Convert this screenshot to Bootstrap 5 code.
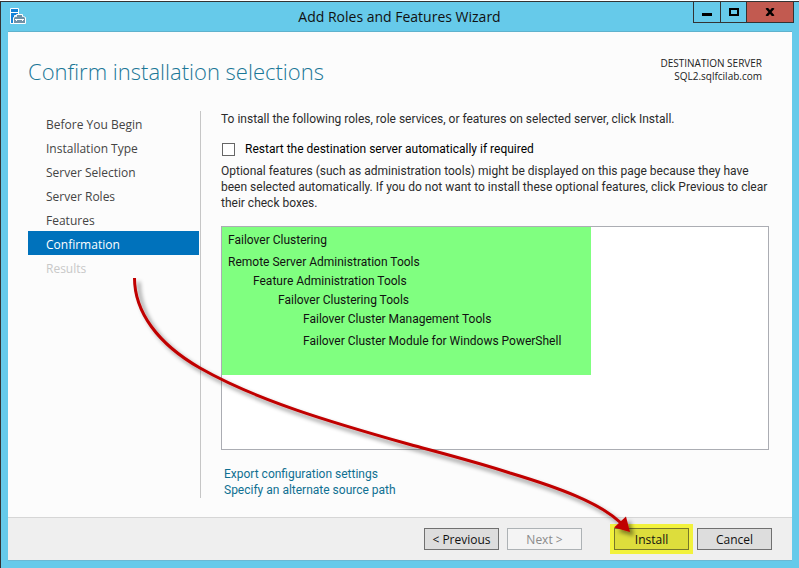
<!DOCTYPE html>
<html lang="en">
<head>
<meta charset="utf-8">
<meta name="viewport" content="width=device-width, initial-scale=1">
<title>Add Roles and Features Wizard</title>
<link href="https://cdn.jsdelivr.net/npm/bootstrap@5.3.0/dist/css/bootstrap.min.css" rel="stylesheet">
<style>
body { font-family: "Open Sans", "Noto Sans", sans-serif; font-size: 12px; line-height: 16px; color: #2b2b2b; background: #fff; padding-top: 1px; }
.wizard { min-height: calc(100vh - 1px); background: #66caea; border: 1px solid #333; border-right: 0; padding: 0 7px 7px; position: relative; }
.title-bar { height: 29px; }
.title-text { font-size: 14px; line-height: 29px; color: #111; padding-left: 80px; }
.app-icon { width: 16px; height: 17px; margin: 6px 0 0 2px; }
.win-group { margin-right: -2px; }
.win-btn { width: 26px; height: 21px; padding: 0; border: 1px solid #333; border-top: 0; border-left: 0; background: transparent; display: flex; align-items: center; justify-content: center; }
.win-first { width: 28px; border-left: 1px solid #333; }
.win-first svg { margin-top: 4px; }
.win-close { width: 47px; background: #c25a50; }
.client { background: #fcfcfc; border-top: 1px solid #5fb2cd; border-bottom: 1px solid #6cb8d3; }
.heading { font-family: "Open Sans", sans-serif; font-size: 22px; line-height: 30px; font-weight: 300; color: #1a7797; }
.server { font-size: 10px; line-height: 13px; color: #222; padding: 1px 30px 0 0; }
.head-row { padding: 24px 0 0 20px; height: 79px; }
.steps { width: 173px; margin-left: 20px; border-right: 1px solid #c6c6c6; padding-right: 1px; }
.steps a { display: block; height: 24px; line-height: 28px; padding-left: 18px; color: #444; text-decoration: none; }
.steps a.current { background: #0072bc; color: #fff; }
.steps a.pending { color: #c8c8c8; }
.pane { font-family: Roboto, "Open Sans", sans-serif; padding: 0 23px 0 20px; }
.restart { margin: 14px 0 6px; color: #000; gap: 10px; }
.restart .form-check-input { width: 13px; height: 13px; margin: 0 0 0 1px; border: 1px solid #666; border-radius: 0; }
.selection { border: 1px solid #abadb3; background: #fff; height: 224px; margin-top: 15px; }
.selected { background: #80ff80; color: #111; max-width: 369px; height: 148px; padding: 4px 6px; line-height: 19px; }
.selected ul { list-style: none; margin: 0; padding-left: 25px; }
.gap-top { margin-top: 3px; }
.links { padding: 16px 0 0 3px; }
.links a { color: #0f7092; text-decoration: none; }
.main-row { padding-bottom: 19px; }
.actions { background: #efefef; border-top: 1px solid #d6d6d6; padding: 6px 20px 6px 0; }
.wbtn { width: 75px; height: 22px; padding: 1px 0 0; border: 1px solid #707070; border-radius: 0; background: #ddd; font-size: 12px; line-height: 20px; color: #111; }
.wbtn:disabled { background: #f4f4f4; border-color: #adb2b5; color: #8a8a8a; opacity: 1; }
.install-mark { background: #f2f23c; padding: 4px; margin: 0 4px 0 28px; }
.install-mark .wbtn { background: #dddd3c; border-color: #77772a; }
.arrow { position: absolute; left: -1px; top: -2px; width: 799px; height: 568px; pointer-events: none; }
</style>
</head>
<body>
<div class="wizard d-flex flex-column">
  <header class="title-bar d-flex flex-shrink-0 align-items-start">
    <svg class="app-icon flex-shrink-0" viewBox="0 0 16 17" aria-hidden="true">
      <path d="M.5 .5h8v7h-4v8h-4z" fill="#1583d8" stroke="#fff"/>
      <path d="M1 4.500h7.500" stroke="#fff"/>
      <path d="M3.500 9.500l2-1h1v-2h6v2h1l2 1v6h-12z" fill="#7092a8" stroke="#fff"/>
      <path d="M5 11.500h9M6.500 11v2m6-2v2" fill="none" stroke="#fff"/>
    </svg>
    <div class="title-text flex-grow-1 text-center">Add Roles and Features Wizard</div>
    <div class="win-group d-flex">
      <button class="win-btn win-first" type="button" aria-label="Minimize"><svg width="10" height="3"><path d="M0 0h10v3H0z"/></svg></button>
      <button class="win-btn" type="button" aria-label="Maximize"><svg width="10" height="8"><path d="M1 1h8v6H1z" fill="none" stroke="#000" stroke-width="2"/></svg></button>
      <button class="win-btn win-close" type="button" aria-label="Close"><svg width="10" height="8"><path d="M1.500 0l7 8M8.500 0l-7 8" stroke="#000" stroke-width="2.500"/></svg></button>
    </div>
  </header>
  <main class="client d-flex flex-column flex-grow-1">
    <div class="head-row d-flex justify-content-between">
      <h1 class="heading m-0">Confirm installation selections</h1>
      <div class="server text-end">DESTINATION SERVER<br>SQL2.sqlfcilab.com</div>
    </div>
    <div class="main-row d-flex flex-grow-1">
      <nav class="steps flex-shrink-0" aria-label="Wizard steps">
        <a href="#">Before You Begin</a>
        <a href="#">Installation Type</a>
        <a href="#">Server Selection</a>
        <a href="#">Server Roles</a>
        <a href="#">Features</a>
        <a href="#" class="current" aria-current="step">Confirmation</a>
        <a href="#" class="pending">Results</a>
      </nav>
      <section class="pane flex-grow-1">
        <p class="m-0">To install the following roles, role services, or features on selected server, click Install.</p>
        <div class="restart d-flex align-items-center">
          <input class="form-check-input" type="checkbox" id="restart"><label for="restart">Restart the destination server automatically if required</label>
        </div>
        <p class="m-0">Optional features (such as administration tools) might be displayed on this page because they have been selected automatically. If you do not want to install these optional features, click Previous to clear their check boxes.</p>
        <div class="selection">
          <div class="selected">
            <div>Failover Clustering</div>
            <div class="gap-top">Remote Server Administration Tools</div>
            <ul>
              <li>Feature Administration Tools
                <ul>
                  <li>Failover Clustering Tools
                    <ul>
                      <li>Failover Cluster Management Tools</li>
                      <li class="gap-top">Failover Cluster Module for Windows PowerShell</li>
                    </ul>
                  </li>
                </ul>
              </li>
            </ul>
          </div>
        </div>
        <div class="links d-flex flex-column align-items-start">
          <a href="#">Export configuration settings</a>
          <a href="#">Specify an alternate source path</a>
        </div>
      </section>
    </div>
    <footer class="actions d-flex justify-content-end align-items-center">
      <button class="wbtn me-2" type="button">&lt; Previous</button>
      <button class="wbtn" type="button" disabled>Next &gt;</button>
      <div class="install-mark d-flex"><button class="wbtn" type="button">Install</button></div>
      <button class="wbtn" type="button">Cancel</button>
    </footer>
  </main>
  <svg class="arrow" viewBox="0 0 799 568" aria-hidden="true">
    <defs><filter id="shade" x="-10%" y="-10%" width="120%" height="120%"><feDropShadow dx="4" dy="4" stdDeviation="2" flood-color="#000" flood-opacity=".45"/></filter></defs>
    <g filter="url(#shade)">
      <path d="M134.500 278C134.500 312 158 344 200 368C256 400 330 422 410 444.500C445 454 480 463 510 473C560 488 600 503 621 523" fill="none" stroke="#c00000" stroke-width="3"/>
      <path d="M626 516.500L630 532L614 527.500z" fill="#c00000"/>
    </g>
  </svg>
</div>
<script src="https://cdn.jsdelivr.net/npm/bootstrap@5.3.0/dist/js/bootstrap.bundle.min.js"></script>
</body>
</html>
